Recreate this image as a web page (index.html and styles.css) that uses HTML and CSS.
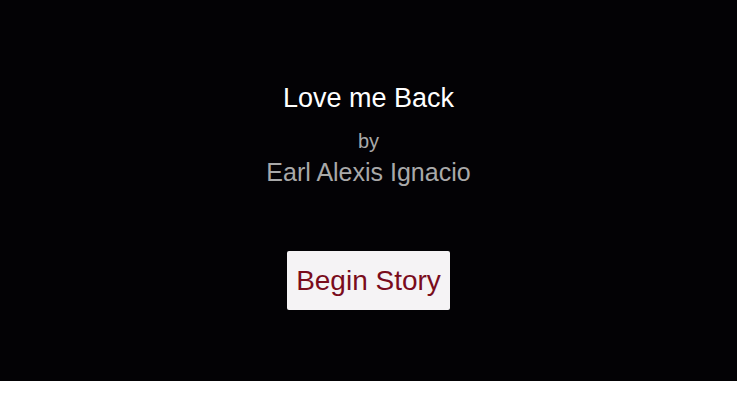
FILE: index.html
```html
<!DOCTYPE html>
<html>
<head>
<meta charset="utf-8">
<link rel="stylesheet" href="styles.css">
</head>
<body>
<div class="stage">
  <h1 class="title">Love me Back</h1>
  <div class="by">by</div>
  <div class="author">Earl Alexis Ignacio</div>
  <button class="begin">Begin Story</button>
</div>
</body>
</html>
```
FILE: styles.css
```css
html, body {
  margin: 0;
  padding: 0;
  background: #ffffff;
}
.stage {
  width: 737px;
  height: 381px;
  background: #030205;
  display: flex;
  flex-direction: column;
  align-items: center;
  font-family: "Liberation Sans", Arial, sans-serif;
  box-sizing: border-box;
  padding-top: 83px;
}
.title {
  margin: 0;
  font-size: 27px;
  font-weight: normal;
  line-height: 31px;
  color: #ffffff;
}
.by {
  margin-top: 16px;
  font-size: 20px;
  line-height: 23px;
  color: #a9a9a9;
}
.author {
  margin-top: 5px;
  font-size: 25px;
  line-height: 29px;
  color: #a9a9a9;
}
.begin {
  margin-top: 64px;
  width: 163px;
  height: 59px;
  padding: 0;
  border: none;
  border-radius: 2px;
  background: #f5f3f5;
  color: #7a0c1c;
  font-family: "Liberation Sans", Arial, sans-serif;
  font-size: 28px;
  line-height: 32px;
}
```
